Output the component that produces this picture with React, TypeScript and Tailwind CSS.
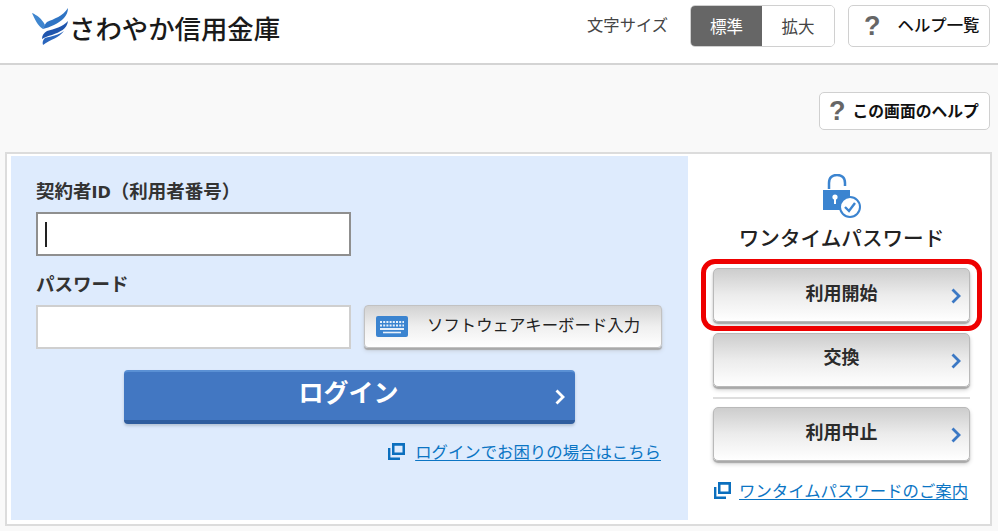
import React from "react";

const Chevron = ({ color = "#3b78c4", w = 10, h = 16 }: { color?: string; w?: number; h?: number }) => (
  <svg width={w} height={h} viewBox="0 0 10 16" fill="none" className="block">
    <path d="M1.5 1.5 L8 8 L1.5 14.5" stroke={color} strokeWidth="2.8" />
  </svg>
);

const WindowIcon = () => (
  <svg width="19" height="19" viewBox="0 0 19 19" className="block shrink-0">
    <path d="M5 1 H18 V13 H5 Z M7.5 3.8 V10.5 H15.5 V3.8 Z" fill="#0b6fbe" fillRule="evenodd" />
    <path d="M1 6 H3.4 V15.6 H13 V18 H1 Z" fill="#0b6fbe" />
  </svg>
);

const GrayButton = ({ label, lift }: { label: string; lift: string }) => (
  <button className="relative flex h-[54px] w-[257px] items-center justify-center rounded-[5px] border border-[#b9b9b9] bg-linear-to-b from-[#cdcdcd] via-[#ececec] to-white text-[18px] leading-none font-bold text-[#2b2b2b] shadow-[0_2px_1px_#a9a9a9,0_3px_4px_#d0d0d0]">
    <span className={lift}>{label}</span>
    <span className="absolute top-[19px] right-[8px]">
      <Chevron />
    </span>
  </button>
);

export default function App() {
  return (
    <div className="h-[531px] w-[998px] overflow-hidden bg-white font-['Noto_Sans_CJK_JP','Noto_Sans',sans-serif]">
      <header className="flex h-[65px] items-start border-b-2 border-[#d4d4d4] bg-white pr-2">
        <div className="ml-[32px] mt-[6px] flex items-center">
          <svg width="37" height="38" viewBox="0 0 37 38" className="block shrink-0">
            <path d="M0 5 C5 7 10 11 13 17 L11 21 C6 18 3 12 0 5 Z" fill="#3f86cf" />
            <path d="M36 0 C36 8 30 13 22 17 C18 19 14 20 11 21 C12 18 13 16 15 14 C22 11 31 8 36 0 Z" fill="#2f74c4" />
            <path d="M36 13 C35 21 28 24 20 27 C16 28 13 29 10 31 C10 27 12 25 15 23 C22 21 31 19 36 13 Z" fill="#1f55ad" />
            <path d="M32 23 C27 30 19 31 11 37 C10 34 11 32 13 30 C20 28 27 27 32 23 Z" fill="#2a66bd" />
          </svg>
          <span className="ml-0 mt-[3px] text-[26.4px] leading-[38px] font-medium text-[#1a1a1a]">さわやか信用金庫</span>
        </div>
        <div className="ml-auto mt-[5px] flex items-center">
          <span className="mr-[22px] -mt-[3px] text-[16.3px] text-[#444]">文字サイズ</span>
          <div className="flex h-[42px] w-[145px] overflow-hidden rounded-[5px] border border-[#d0d0d0] text-[16.5px]">
            <span className="flex w-[71px] items-center justify-center bg-[#666] text-white">標準</span>
            <span className="flex flex-1 items-center justify-center bg-white text-[#444]">拡大</span>
          </div>
          <button className="ml-[13px] flex h-[42px] w-[142px] items-center rounded-[5px] border border-[#d0d0d0] bg-white pl-[15px]">
            <span className="font-['Liberation_Sans',sans-serif] text-[27px] leading-none font-bold text-[#666]">?</span>
            <span className="ml-[17px] -mt-[3px] text-[16.4px] font-medium text-[#111]">ヘルプ一覧</span>
          </button>
        </div>
      </header>

      <main className="h-[466px] bg-[#f9f9f9] pt-[27px] pl-[5px]">
        <div className="flex justify-end pr-[8px]">
          <button className="flex h-[38px] w-[171px] items-center rounded-[5px] border border-[#d0d0d0] bg-white pl-[9px]">
            <span className="font-['Liberation_Sans',sans-serif] text-[27px] leading-none font-bold text-[#666]">?</span>
            <span className="ml-[7px] text-[15.8px] font-bold text-[#111]">この画面のヘルプ</span>
          </button>
        </div>

        <section className="mt-[22px] flex h-[374px] w-[987px] border-2 border-[#dcdcdc] bg-white">
          <div className="my-[2px] ml-[4px] h-[364px] w-[677px] bg-[#deebfd] pl-[25px]">
            <div className="mt-[22px] text-[18.5px] leading-[24px] font-bold text-[#333]">
              契約者<span className="font-['DejaVu_Sans',sans-serif] text-[16px]">ID</span>（利用者番号）
            </div>
            <div className="mt-[7px] flex h-[44px] w-[315px] items-center border-2 border-[#8f8f8f] bg-white pl-[7px]">
              <span className="block h-[25px] w-[2px] bg-[#222]" />
            </div>
            <div className="mt-[15px] text-[18.5px] leading-[24px] font-bold text-[#333]">パスワード</div>
            <div className="mt-[10px] flex items-start">
              <div className="h-[44px] w-[315px] border-2 border-[#cfcfcf] bg-white" />
              <button className="ml-[13px] flex h-[43px] w-[298px] items-center rounded-[4px] border border-[#c2c2c2] bg-linear-to-b from-[#d2d2d2] via-[#efefef] to-white pl-[11px] shadow-[0_2px_1px_#a9a9a9,0_3px_4px_#c9d2de]">
                <svg width="32" height="21" viewBox="0 0 32 21" className="block shrink-0">
                  <rect width="32" height="21" rx="2" fill="#3b84d0" />
                  <path d="M4 6h24M4 9.5h24" stroke="#e8f0fa" strokeWidth="2" strokeDasharray="2 1.2" />
                  <path d="M4 13h24" stroke="#e8f0fa" strokeWidth="2" />
                  <path d="M7 16.5h18" stroke="#e8f0fa" strokeWidth="1.6" />
                </svg>
                <span className="-mt-[4px] ml-[19px] text-[16.4px] text-[#222]">ソフトウェアキーボード入力</span>
              </button>
            </div>
            <div className="ml-[88px] mt-[21px]">
              <button className="relative flex h-[54px] w-[451px] items-center justify-center rounded-[4px] border-t-2 border-b-[4px] border-t-[#5a90d4] border-b-[#2f5d9e] bg-[#4277c2] text-[25px] leading-none font-bold text-white shadow-[0_2px_3px_#b5c3d6]">
                <span className="-mt-[10px] -ml-[2px]">ログイン</span>
                <span className="absolute top-[17px] right-[10px]">
                  <Chevron color="#ffffff" />
                </span>
              </button>
            </div>
            <div className="mt-[15px] flex w-[625px] items-center justify-end">
              <WindowIcon />
              <a className="ml-[9px] text-[16.4px] leading-[24px] text-[#0b75c4] underline underline-offset-[2px]">ログインでお困りの場合はこちら</a>
            </div>
          </div>

          <div className="flex w-[300px] flex-col pl-[25px]">
            <div className="flex w-[257px] flex-col items-center">
              <svg width="38" height="44" viewBox="0 0 38 44" className="mt-[20px] block">
                <path d="M6 15 V9 C6 3 10 1 14 1 C18 1 22 3 22 9 V12" fill="none" stroke="#3b84d0" strokeWidth="2.5" />
                <rect x="0" y="16" width="27" height="20" fill="#3b84d0" />
                <circle cx="12" cy="23" r="2.6" fill="#fff" />
                <rect x="11" y="24" width="2" height="6" fill="#fff" />
                <circle cx="27" cy="33" r="10" fill="#fff" stroke="#3b84d0" strokeWidth="2" />
                <path d="M22 33 L26 37 L32 29" fill="none" stroke="#3b84d0" strokeWidth="2.4" />
              </svg>
              <div className="mt-[4px] text-[20.6px] leading-[30px] font-medium text-[#222]">ワンタイムパスワード</div>
            </div>
            <div className="relative mt-[16px]">
              <GrayButton label="利用開始" lift="-mt-[7px]" />
              <div className="pointer-events-none absolute -top-[9px] -left-[12px] h-[72px] w-[281px] rounded-[14px] border-[5px] border-[#ee0000]" />
            </div>
            <div className="mt-[11px]">
              <GrayButton label="交換" lift="-mt-[9px]" />
            </div>
            <div className="mt-[10px] h-[2px] w-[257px] bg-[#dedede]" />
            <div className="mt-[8px]">
              <GrayButton label="利用中止" lift="-mt-[7px]" />
            </div>
            <div className="mt-[17px] flex w-[257px] items-center">
              <WindowIcon />
              <a className="ml-[7px] whitespace-nowrap text-[16.4px] leading-[24px] text-[#0b75c4] underline underline-offset-[2px]">ワンタイムパスワードのご案内</a>
            </div>
          </div>
        </section>
      </main>
    </div>
  );
}
